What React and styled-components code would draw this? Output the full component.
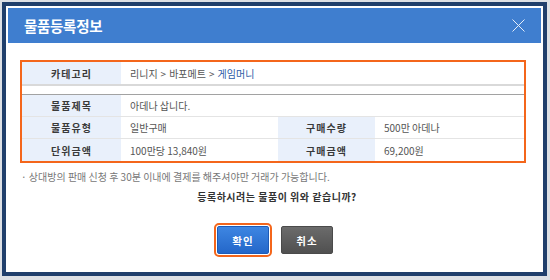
// NPM
import React from 'react';
import styled, { createGlobalStyle } from 'styled-components';

// STYLES
const GlobalStyle = createGlobalStyle`
  html, body {
    margin: 0;
    padding: 0;
    background: #fff;
  }
  body {
    font-family: "Noto Sans CJK KR", "Noto Sans", "Liberation Sans", sans-serif;
  }
  * {
    box-sizing: border-box;
  }
`;

const Outer = styled.div`
  width: 550px;
  height: 280px;
  border-style: solid;
  border-color: #dde0e5;
  border-width: 2px 3px 4px 2px;
  background: #fff;
`;

const Frame = styled.div`
  height: 100%;
  border: 4px solid #203f6c;
  padding: 2px;
  display: flex;
  flex-direction: column;
  background: #fff;
`;

const Header = styled.div`
  height: 35px;
  flex: none;
  background: #3f7ecf;
  display: flex;
  align-items: center;
  justify-content: space-between;
  padding: 0 16px 0 16px;
`;

const Title = styled.h1`
  margin: 0;
  color: #fff;
  font-size: 14.5px;
  font-weight: 700;
  letter-spacing: -0.3px;
`;

const Close = styled.button`
  border: 0;
  background: none;
  padding: 0;
  width: 13px;
  height: 13px;
  display: flex;
  cursor: pointer;
`;

const Body = styled.div`
  flex: 1;
  display: flex;
  flex-direction: column;
  padding: 17px 15px 0 12px;
`;

const InfoBox = styled.div`
  border: 2px solid #f4661b;
`;

const Grid = styled.div`
  display: grid;
  grid-template-columns: 99px 157px 97px 1fr;
  border-top: ${p => (p.$split ? '1px solid #a2a2a2' : '0')};
  border-bottom: ${p => (p.$split ? '0' : '2px solid #d9d9d9')};
  margin-top: ${p => (p.$split ? '8px' : '0')};
`;

const Label = styled.div`
  height: 22px;
  background: #e9f0fb;
  color: #3a3a3a;
  font-size: 10px;
  font-weight: 700;
  letter-spacing: 1px;
  display: flex;
  align-items: center;
  justify-content: center;
  border-bottom: ${p => (p.$last ? '0' : '1px solid #e4e4e4')};
`;

const Value = styled.div`
  height: 22px;
  grid-column: ${p => (p.$wide ? 'span 3' : 'auto')};
  color: #555;
  font-size: 10px;
  display: flex;
  align-items: center;
  padding-left: 9px;
  border-bottom: ${p => (p.$last ? '0' : '1px solid #e4e4e4')};
`;

const Link = styled.span`
  color: #2c5ca6;
`;

const Sep = styled.span`
  margin: 0 3px;
`;

const Notice = styled.p`
  margin: 7px 0 0 1px;
  font-size: 10px;
  line-height: 14px;
  color: #777;
`;

const Question = styled.p`
  margin: 6px 0 0;
  padding-left: 8px;
  text-align: center;
  font-size: 10px;
  line-height: 14px;
  font-weight: 700;
  letter-spacing: 0.5px;
  color: #333;
`;

const Buttons = styled.div`
  display: flex;
  justify-content: center;
  gap: 12px;
  margin-top: 22px;
  padding-left: 4px;
`;

const Button = styled.button`
  width: 52px;
  height: 28px;
  font-family: inherit;
  font-size: 10.5px;
  font-weight: 700;
  letter-spacing: 1px;
  color: #fff;
  border-radius: 2px;
  cursor: pointer;
  border: 1px solid ${p => (p.$primary ? '#1d5bb8' : '#4a4a4a')};
  background: ${p =>
    p.$primary
      ? 'linear-gradient(#3e86e2, #2467c9)'
      : 'linear-gradient(#6b6b6b, #505050)'};
  outline: ${p => (p.$primary ? '2px solid #f4661b' : 'none')};
  outline-offset: 1px;
`;

// MODULE
export default function App() {
  return (
    <>
      <GlobalStyle />
      <Outer>
        <Frame>
          <Header>
            <Title>물품등록정보</Title>
            <Close aria-label="닫기">
              <svg width="13" height="13" viewBox="0 0 13 13">
                <path d="M0.5 0.5 L12.5 12.5 M12.5 0.5 L0.5 12.5" stroke="#e4edf9" strokeWidth="1" fill="none" />
              </svg>
            </Close>
          </Header>
          <Body>
            <InfoBox>
              <Grid>
                <Label $last>카테고리</Label>
                <Value $wide $last>
                  리니지<Sep>&gt;</Sep>바포메트<Sep>&gt;</Sep><Link>게임머니</Link>
                </Value>
              </Grid>
              <Grid $split>
                <Label>물품제목</Label>
                <Value $wide>아데나 삽니다.</Value>
                <Label>물품유형</Label>
                <Value>일반구매</Value>
                <Label>구매수량</Label>
                <Value>500만 아데나</Value>
                <Label $last>단위금액</Label>
                <Value $last>100만당 13,840원</Value>
                <Label $last>구매금액</Label>
                <Value $last>69,200원</Value>
              </Grid>
            </InfoBox>
            <Notice>· 상대방의 판매 신청 후 30분 이내에 결제를 해주셔야만 거래가 가능합니다.</Notice>
            <Question>등록하시려는 물품이 위와 같습니까?</Question>
            <Buttons>
              <Button $primary>확인</Button>
              <Button>취소</Button>
            </Buttons>
          </Body>
        </Frame>
      </Outer>
    </>
  );
}
